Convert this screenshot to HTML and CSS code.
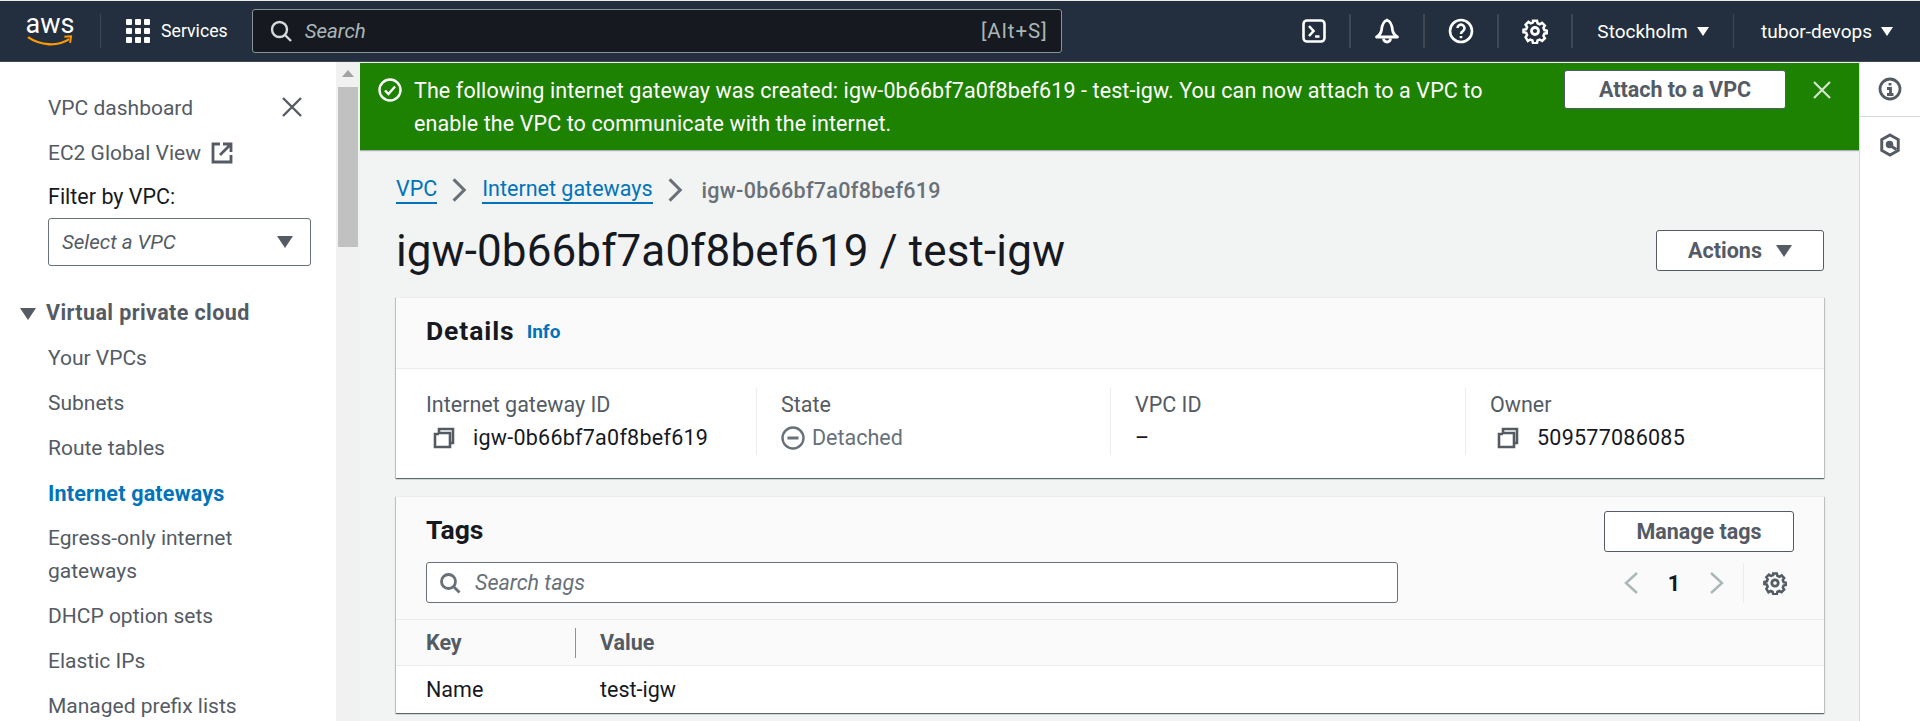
FILE: index.html
```html
<!DOCTYPE html>
<html lang="en">
<head>
    <meta charset="UTF-8">
    <meta name="viewport" content="width=device-width, initial-scale=1.0">
    <title>igw-0b66bf7a0f8bef619 / test-igw</title>
    <link rel="stylesheet" href="styles.css">
</head>
<body>
    <header class="topnav">
        <a class="logo">
            <span class="logo-text">aws</span>
            <svg class="logo-smile" viewBox="0 0 48 12" width="46" height="12"><path d="M1 2c13 9 31 10 43 2" fill="none" stroke="#f90" stroke-width="2.4"/><path d="M39 1.500l7-.5-1 7" fill="none" stroke="#f90" stroke-width="2"/></svg>
        </a>
        <span class="nav-sep"></span>
        <svg class="grid-icon" viewBox="0 0 24 24" width="24" height="24" fill="#fff"><rect x="0" y="0" width="6" height="6" rx="1"/><rect x="9" y="0" width="6" height="6" rx="1"/><rect x="18" y="0" width="6" height="6" rx="1"/><rect x="0" y="9" width="6" height="6" rx="1"/><rect x="9" y="9" width="6" height="6" rx="1"/><rect x="18" y="9" width="6" height="6" rx="1"/><rect x="0" y="18" width="6" height="6" rx="1"/><rect x="9" y="18" width="6" height="6" rx="1"/><rect x="18" y="18" width="6" height="6" rx="1"/></svg>
        <span class="services">Services</span>
        <div class="nav-search">
            <svg viewBox="0 0 24 24" width="24" height="24" fill="none" stroke="#d5dbdb" stroke-width="2.4"><circle cx="10.500" cy="10.500" r="7.500"/><path d="M16 16l6 6"/></svg>
            <span class="nav-search-text">Search</span>
            <span class="nav-search-key">[Alt+S]</span>
        </div>
        <div class="nav-right">
            <span class="nav-cell cell-term">
                <svg viewBox="0 0 24 24" width="24" height="24" fill="none" stroke="#fff" stroke-width="2.600"><rect x="1.500" y="1.500" width="21" height="21" rx="3.500"/><path d="M7 7l4.500 5L7 17M13 17.500h4.500"/></svg>
            </span>
            <span class="nav-cell">
                <svg viewBox="0 0 26 26" width="26" height="26" fill="none" stroke="#fff" stroke-width="2.800" stroke-linejoin="round"><path d="M2.500 19c2.500-1.500 4.500-3.500 5-7C8 7.500 10 3 13 2c3 1 5 5.500 5.500 10 .5 3.500 2.500 5.500 5 7z"/><path d="M9.500 20.500a3.500 3.500 0 0 0 7 0"/></svg>
            </span>
            <span class="nav-cell">
                <svg viewBox="0 0 26 26" width="26" height="26" fill="none" stroke="#fff" stroke-width="2.600"><circle cx="13" cy="13" r="11"/><path d="M9.500 10a3.500 3.500 0 1 1 5.500 3c-1.500 1-2 1.500-2 3"/><path d="M13 18v2.200"/></svg>
            </span>
            <span class="nav-cell">
                <svg viewBox="0 0 26 26" width="26" height="26" fill="none" stroke="#fff" stroke-width="2.800"><path d="M10.800 1.500h4.400l.7 3 2.400 1 2.600-1.600 3.100 3.100-1.600 2.600 1 2.400 3 .7v2.600l-3 .7-1 2.400 1.600 2.600-3.100 3.100-2.600-1.600-2.400 1-.7 3h-4.400l-.7-3-2.400-1-2.600 1.600L2.600 20l1.600-2.600-1-2.400-3-.7v-2.600l3-.7 1-2.400L2.600 6l3.100-3.100 2.600 1.600 2.400-1z" transform="translate(1.300 1.300) scale(.9)"/><circle cx="13" cy="13" r="3.500"/></svg>
            </span>
            <span class="nav-cell nav-text cell-region">Stockholm <i class="tri-small"></i></span>
            <span class="nav-cell nav-text cell-user">tubor-devops <i class="tri-small"></i></span>
        </div>
    </header>

    <div class="layout">
        <aside class="sidebar">
            <svg class="side-close" viewBox="0 0 20 20" width="20" height="20" fill="none" stroke="#545b64" stroke-width="2.400"><path d="M1 1l18 18M19 1L1 19"/></svg>
            <a class="side-link">VPC dashboard</a>
            <a class="side-link">EC2 Global View
                <svg class="ext-icon" viewBox="0 0 22 22" width="22" height="22" fill="none" stroke="#545b64" stroke-width="2.800"><path d="M9 2H2v18h18v-7"/><path d="M12 2h8v8M20 2L9 13"/></svg>
            </a>
            <div class="filter-label">Filter by VPC:</div>
            <div class="filter-select">
                <span>Select a VPC</span>
                <i class="tri"></i>
            </div>
            <div class="side-section"><i class="tri tri-dark"></i>Virtual private cloud</div>
            <a class="side-link">Your VPCs</a>
            <a class="side-link">Subnets</a>
            <a class="side-link">Route tables</a>
            <a class="side-link active">Internet gateways</a>
            <a class="side-link wrap">Egress-only internet gateways</a>
            <a class="side-link">DHCP option sets</a>
            <a class="side-link">Elastic IPs</a>
            <a class="side-link">Managed prefix lists</a>
        </aside>

        <div class="scrollbar">
            <i class="scroll-up"></i>
            <div class="scroll-thumb"></div>
        </div>

        <main class="main">
            <div class="flash">
                <svg class="flash-icon" viewBox="0 0 24 24" width="24" height="24" fill="none" stroke="#fff" stroke-width="2.400"><circle cx="12" cy="12" r="10.500"/><path d="M7 12.500l3.500 3.500 6.500-7.500"/></svg>
                <div class="flash-text">The following internet gateway was created: igw-0b66bf7a0f8bef619 - test-igw. You can now attach to a VPC to<br>enable the VPC to communicate with the internet.</div>
                <button class="btn flash-btn">Attach to a VPC</button>
                <svg class="flash-close" viewBox="0 0 20 20" width="20" height="20" fill="none" stroke="#d5e6cf" stroke-width="2.200"><path d="M2 2l16 16M18 2L2 18"/></svg>
            </div>

            <div class="content">
                <nav class="crumbs">
                    <a class="crumb">VPC</a>
                    <svg class="crumb-sep" viewBox="0 0 14 22" width="17" height="26" fill="none" stroke="#687078" stroke-width="2.600"><path d="M2 2l9 9-9 9"/></svg>
                    <a class="crumb">Internet gateways</a>
                    <svg class="crumb-sep" viewBox="0 0 14 22" width="17" height="26" fill="none" stroke="#687078" stroke-width="2.600"><path d="M2 2l9 9-9 9"/></svg>
                    <span class="crumb-current">igw-0b66bf7a0f8bef619</span>
                </nav>

                <div class="page-head">
                    <h1>igw-0b66bf7a0f8bef619 / test-igw</h1>
                    <button class="btn actions-btn">Actions <i class="tri"></i></button>
                </div>

                <section class="card details">
                    <div class="card-head">
                        <h2>Details</h2>
                        <a class="info-link">Info</a>
                    </div>
                    <div class="detail-grid">
                        <div class="detail-col">
                            <div class="detail-label">Internet gateway ID</div>
                            <div class="detail-value">
                                <svg class="copy-icon" viewBox="0 0 22 22" width="22" height="22" fill="none" stroke="#545b64" stroke-width="2.600"><path d="M6 6h11v14H2V7h4"/><path d="M6 6V2h14v14h-3"/></svg>
                                <span class="mono-ish">igw-0b66bf7a0f8bef619</span>
                            </div>
                        </div>
                        <div class="detail-col">
                            <div class="detail-label">State</div>
                            <div class="detail-value state">
                                <svg viewBox="0 0 24 24" width="24" height="24" fill="none" stroke="#687078" stroke-width="2.400"><circle cx="12" cy="12" r="10.500"/><path d="M6.500 12h11" stroke-width="3"/></svg>
                                Detached
                            </div>
                        </div>
                        <div class="detail-col">
                            <div class="detail-label">VPC ID</div>
                            <div class="detail-value">–</div>
                        </div>
                        <div class="detail-col">
                            <div class="detail-label">Owner</div>
                            <div class="detail-value">
                                <svg class="copy-icon" viewBox="0 0 22 22" width="22" height="22" fill="none" stroke="#545b64" stroke-width="2.600"><path d="M6 6h11v14H2V7h4"/><path d="M6 6V2h14v14h-3"/></svg>
                                <span class="mono-ish">509577086085</span>
                            </div>
                        </div>
                    </div>
                </section>

                <section class="card tags">
                    <div class="tags-head">
                        <div class="tags-left">
                            <h2>Tags</h2>
                            <div class="tag-search">
                                <svg viewBox="0 0 22 22" width="22" height="22" fill="none" stroke="#687078" stroke-width="2.800"><circle cx="9.500" cy="9.500" r="7"/><path d="M14.500 14.500l6 6"/></svg>
                                <span>Search tags</span>
                            </div>
                        </div>
                        <div class="tags-right">
                            <button class="btn manage-btn">Manage tags</button>
                            <div class="pager">
                                <svg viewBox="0 0 16 24" width="16" height="24" fill="none" stroke="#aab7b8" stroke-width="2.400"><path d="M14 2L3 12l11 10"/></svg>
                                <span class="page-num">1</span>
                                <svg viewBox="0 0 16 24" width="16" height="24" fill="none" stroke="#aab7b8" stroke-width="2.400"><path d="M2 2l11 10L2 22"/></svg>
                                <span class="pager-sep"></span>
                                <svg viewBox="0 0 26 26" width="24" height="24" fill="none" stroke="#545b64" stroke-width="3"><path d="M10.800 1.500h4.400l.7 3 2.400 1 2.600-1.600 3.100 3.100-1.600 2.600 1 2.400 3 .7v2.600l-3 .7-1 2.400 1.600 2.600-3.100 3.100-2.600-1.600-2.400 1-.7 3h-4.400l-.7-3-2.400-1-2.600 1.600L2.600 20l1.600-2.600-1-2.400-3-.7v-2.600l3-.7 1-2.400L2.600 6l3.100-3.100 2.600 1.600 2.400-1z" transform="translate(1.300 1.300) scale(.9)"/><circle cx="13" cy="13" r="3.500"/></svg>
                            </div>
                        </div>
                    </div>
                    <div class="tag-row tag-row-head">
                        <div class="tag-key"><span>Key</span></div>
                        <div class="tag-val">Value</div>
                    </div>
                    <div class="tag-row">
                        <div class="tag-key">Name</div>
                        <div class="tag-val">test-igw</div>
                    </div>
                </section>
            </div>
        </main>

        <aside class="toolsbar">
            <div class="tool-cell">
                <svg viewBox="0 0 24 24" width="24" height="24" fill="none" stroke="#545b64" stroke-width="2.800"><circle cx="12" cy="12" r="10"/><path d="M12 6v2.500M9 11.500H12.500V17M9 17.500h6.500"/></svg>
            </div>
            <div class="tool-cell">
                <svg viewBox="0 0 24 26" width="22" height="24" fill="none" stroke="#545b64" stroke-width="3.200"><path d="M12 2l9 5v12l-9 5-9-5V7z"/><circle cx="11.500" cy="12.500" r="2.500" fill="#545b64"/><path d="M13 14l6 4"/></svg>
            </div>
        </aside>
    </div>
</body>
</html>
```

FILE: styles.css
```css
* {
    box-sizing: border-box;
}
html, body {
    height: 100%;
}
body {
    margin: 0;
    overflow: hidden;
    background: #fff;
    color: #16191f;
    font-family: Roboto, "Noto Sans", Arial, sans-serif;
    font-size: 21.5px;
}
button {
    font-family: inherit;
}

/* top bar */
.topnav {
    height: 62px;
    display: flex;
    align-items: center;
    background: #232f3e;
    border-top: 1px solid #e9ebed;
    border-bottom: 1px solid #414750;
    color: #fff;
}
.logo {
    width: 100px;
    display: flex;
    flex-direction: column;
    align-items: center;
}
.logo-text {
    font-size: 27px;
    line-height: 24px;
    margin-top: -3px;
}
.logo-smile {
    margin-top: -1px;
}
.nav-sep {
    width: 1px;
    height: 34px;
    background: #414750;
}
.grid-icon {
    margin-left: 25px;
}
.services {
    margin-left: 11px;
    font-size: 17.7px;
}
.nav-search {
    margin-left: 24px;
    width: 810px;
    height: 44px;
    display: flex;
    align-items: center;
    padding: 0 13px 0 16px;
    background: #16191f;
    border: 1px solid #879596;
    border-radius: 3px;
    color: #aab7b8;
    font-size: 20.5px;
}
.nav-search-text {
    margin-left: 12px;
    font-style: italic;
}
.nav-search-key {
    margin-left: auto;
    letter-spacing: 1px;
}
.nav-right {
    margin-left: auto;
    display: flex;
    align-items: center;
}
.nav-cell {
    height: 34px;
    width: 74px;
    display: flex;
    align-items: center;
    justify-content: center;
    border-right: 2px solid #414750;
}
.cell-term {
    width: 60px;
    padding-left: 11px;
    justify-content: flex-start;
}
.nav-text {
    gap: 9px;
    font-size: 19px;
}
.cell-region {
    width: 161px;
    border-right-width: 1px;
}
.cell-user {
    width: 186px;
    border-right: none;
}
.tri-small {
    display: inline-block;
    border-left: 6px solid transparent;
    border-right: 6px solid transparent;
    border-top: 9px solid #fff;
}

/* page frame */
.layout {
    height: calc(100vh - 62px);
    display: grid;
    grid-template-columns: 336px 24px 1fr 60px;
}

/* left navigation */
.sidebar {
    position: relative;
    padding: 24px 0 0 48px;
    background: #fff;
    overflow: hidden;
}
.side-close {
    position: absolute;
    left: 282px;
    top: 35px;
}
.side-link {
    display: block;
    height: 45px;
    line-height: 45px;
    color: #545b64;
    font-size: 21px;
    white-space: nowrap;
}
.side-link.active {
    color: #0073bb;
    font-size: 21.5px;
    font-weight: 700;
    letter-spacing: 0.2px;
}
.side-link.wrap {
    height: 78px;
    width: 250px;
    line-height: 33px;
    padding-top: 6px;
    white-space: normal;
}
.ext-icon {
    vertical-align: -4px;
    margin-left: 5px;
}
.filter-label {
    height: 33px;
    line-height: 33px;
    margin-top: 4px;
}
.filter-select {
    width: 263px;
    height: 48px;
    margin-top: 5px;
    padding: 0 17px 0 13px;
    display: flex;
    align-items: center;
    justify-content: space-between;
    border: 1px solid #687078;
    border-radius: 3px;
    color: #545b64;
    font-size: 20.5px;
    font-style: italic;
}
.tri {
    display: inline-block;
    border-left: 8px solid transparent;
    border-right: 8px solid transparent;
    border-top: 12px solid #545b64;
}
.side-section {
    height: 46px;
    line-height: 45px;
    margin: 24px 0 0 -28px;
    font-weight: 700;
    letter-spacing: 0.4px;
    color: #545b64;
}
.tri-dark {
    margin-right: 10px;
}

/* fake scrollbar of the window */
.scrollbar {
    background: #f1f1f1;
    padding: 8px 2px 0;
    display: flex;
    flex-direction: column;
    align-items: center;
}
.scroll-up {
    border-left: 6px solid transparent;
    border-right: 6px solid transparent;
    border-bottom: 7px solid #a3a3a3;
}
.scroll-thumb {
    width: 100%;
    height: 160px;
    margin-top: 10px;
    background: #c1c1c1;
}

/* main */
.main {
    background: #f2f3f3;
    overflow: hidden;
    border-right: 1px solid #d5dbdb;
}
.flash {
    margin-top: 1px;
    height: 87px;
    display: flex;
    align-items: flex-start;
    padding: 15px 27px 0 18px;
    background: #1d8102;
    color: #fff;
    box-shadow: 0 1px 1px rgba(0, 28, 36, 0.3);
}
.flash-icon {
    flex: none;
}
.flash-text {
    margin-left: 12px;
    line-height: 33px;
    flex: 1;
    margin-top: -4px;
    letter-spacing: 0.1px;
    white-space: nowrap;
}
.flash-btn {
    width: 222px;
    height: 39px;
    margin-top: -8px;
    border-color: #fff;
}
.flash-close {
    margin: 2px 0 0 26px;
}
.btn {
    background: #fff;
    border: 1px solid #545b64;
    border-radius: 3px;
    color: #545b64;
    font-size: 21.5px;
    font-weight: 700;
}
.content {
    padding: 0 35px 0 36px;
}

/* breadcrumb and title */
.crumbs {
    height: 40px;
    margin-top: 20px;
    display: flex;
    align-items: center;
    gap: 14px;
}
.crumb {
    color: #0073bb;
    border-bottom: 2px solid #0073bb;
    line-height: 26px;
}
.crumb-current {
    color: #687078;
    font-weight: 500;
    letter-spacing: 0.3px;
    margin-left: 4px;
}
.page-head {
    height: 53px;
    margin-top: 14px;
    display: flex;
    align-items: center;
    justify-content: space-between;
}
h1 {
    margin: 0;
    font-size: 44px;
    font-weight: 400;
    letter-spacing: 0.1px;
}
.actions-btn {
    width: 168px;
    height: 41px;
    display: flex;
    align-items: center;
    justify-content: center;
    gap: 14px;
}

/* cards */
.card {
    background: #fff;
    border-top: 1px solid #eaeded;
    box-shadow: 0 1px 1px 0 rgba(0, 28, 36, 0.5), 1px 1px 1px 0 rgba(0, 28, 36, 0.15), -1px 1px 1px 0 rgba(0, 28, 36, 0.15);
}
h2 {
    margin: 0;
    font-size: 26.5px;
    font-weight: 700;
}
.details {
    margin-top: 20px;
    height: 181px;
}
.card-head {
    height: 71px;
    display: flex;
    align-items: center;
    padding: 0 0 6px 30px;
    gap: 12px;
    background: #fafafa;
    border-bottom: 1px solid #eaeded;
}
.card-head h2 {
    letter-spacing: 0.9px;
}
.info-link {
    color: #0073bb;
    font-size: 19px;
    font-weight: 700;
    margin-top: 3px;
}
.detail-grid {
    display: grid;
    grid-template-columns: 330px 354px 355px 1fr;
    padding: 19px 0 0 30px;
}
.detail-col {
    height: 67px;
    padding-left: 24px;
    border-left: 1px solid #eaeded;
}
.detail-col:first-child {
    padding-left: 0;
    border-left: none;
}
.detail-label {
    color: #545b64;
    line-height: 33px;
}
.detail-value {
    display: flex;
    align-items: center;
    height: 33px;
}
.mono-ish {
    letter-spacing: 0.25px;
}
.copy-icon {
    margin: 0 18px 0 7px;
}
.state {
    color: #687078;
    gap: 7px;
}

/* tags card */
.tags {
    margin-top: 18px;
    height: 217px;
}
.tags-head {
    height: 123px;
    display: flex;
    justify-content: space-between;
    padding: 0 30px;
    background: #fafafa;
    border-bottom: 1px solid #eaeded;
}
.tags-left {
    width: 972px;
}
.tags-left h2 {
    line-height: 32px;
    margin-top: 17px;
}
.tag-search {
    height: 41px;
    margin-top: 16px;
    padding: 0 12px;
    display: flex;
    align-items: center;
    gap: 14px;
    background: #fff;
    border: 1px solid #687078;
    border-radius: 3px;
    color: #687078;
    font-style: italic;
}
.tags-right {
    padding-top: 14px;
}
.manage-btn {
    width: 190px;
    height: 41px;
    display: block;
    margin-left: auto;
}
.pager {
    margin-top: 11px;
    height: 40px;
    padding-right: 7px;
    display: flex;
    align-items: center;
    justify-content: flex-end;
}
.page-num {
    width: 70px;
    text-align: center;
    font-weight: 700;
}
.pager-sep {
    width: 1px;
    height: 40px;
    margin: 0 19px 0 18px;
    background: #eaeded;
}
.tag-row {
    height: 47px;
    display: flex;
    align-items: center;
    padding-left: 30px;
}
.tag-row-head {
    height: 46px;
    background: #fafafa;
    border-bottom: 1px solid #eaeded;
    color: #545b64;
    font-weight: 700;
}
.tag-key {
    width: 174px;
}
.tag-row-head .tag-key {
    height: 30px;
    line-height: 30px;
    width: 150px;
    margin-right: 24px;
    border-right: 1px solid #879596;
}

/* right tools panel */
.toolsbar {
    background: #fff;
}
.tool-cell {
    height: 55px;
    display: flex;
    align-items: center;
    justify-content: center;
    border-bottom: 1px solid #d5dbdb;
}
.tool-cell + .tool-cell {
    border-bottom: none;
}
```
